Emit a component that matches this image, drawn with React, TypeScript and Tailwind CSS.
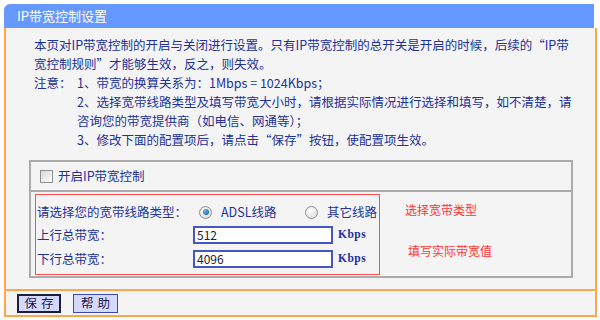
import React from 'react';

const ink = 'text-[#22329a]';

function Radio({ checked }: { checked?: boolean }) {
  return (
    <span className="w-[13px] h-[13px] rounded-full border border-[#8e9092] bg-[radial-gradient(circle_at_40%_35%,#ffffff,#d4d4d4)] flex items-center justify-center shrink-0">
      {checked && (
        <span className="w-[6px] h-[6px] rounded-full bg-[radial-gradient(circle_at_35%_35%,#5fb6e6,#145a8c)]" />
      )}
    </span>
  );
}

function Checkbox() {
  return (
    <span className="w-[13px] h-[13px] border border-[#8e9092] bg-linear-to-br from-[#d6d6d6] to-[#ffffff] shrink-0" />
  );
}

function BandRow({ label, value }: { label: string; value: string }) {
  return (
    <div className="h-[24px] flex items-center">
      <div className="w-[156px]">{label}</div>
      <div className="w-[140px] h-[18px] border-2 border-[#4657c4] bg-white text-[12px] leading-[14px] text-[#222] pl-[2px]">
        {value}
      </div>
      <span className="ml-[5px] font-['Liberation_Serif',serif] font-bold text-[11.5px] tracking-[0.5px]">Kbps</span>
    </div>
  );
}

export default function App() {
  return (
    <div className="w-[600px] h-[320px] bg-white pt-[4px] pl-[4px] font-['Noto_Sans_CJK_SC',sans-serif]">
      <div className="w-[593px]">
        <div className="w-[590px] h-[24px] bg-[#6699ff] rounded-tl-[6px] pl-[13px] text-[13px] leading-[24px] text-white">
          IP带宽控制设置
        </div>

        <div className="h-[261px] border-x-2 border-[#ffa64d] bg-[#f4f4f4] pt-[7px]">
          <div className={`pl-[28px] text-[12.5px] leading-[19px] whitespace-nowrap ${ink}`}>
            <div>本页对IP带宽控制的开启与关闭进行设置。只有IP带宽控制的总开关是开启的时候，后续的“IP带</div>
            <div>宽控制规则”才能够生效，反之，则失效。</div>
            <div className="flex">
              <span className="w-[43px]">注意：</span>
              <div>
                <div>1、带宽的换算关系为：1Mbps = 1024Kbps；</div>
                <div>2、选择宽带线路类型及填写带宽大小时，请根据实际情况进行选择和填写，如不清楚，请</div>
                <div>咨询您的带宽提供商（如电信、网通等）；</div>
                <div>3、修改下面的配置项后，请点击“保存”按钮，使配置项生效。</div>
              </div>
            </div>
          </div>

          <div className="ml-[23px] mt-[11px] w-[544px] h-[118px] border-2 border-[#ababab]">
            <div className="h-[30px] border-b-2 border-[#ababab] flex items-center pl-[9px] gap-[5px]">
              <Checkbox />
              <span className={`text-[12.5px] ${ink}`}>开启IP带宽控制</span>
            </div>

            <div className="flex pl-[4px] pt-[2px]">
              <div className={`w-[345px] h-[81px] border border-[#ff4d4d] pt-[6px] pl-[1px] text-[12.5px] ${ink}`}>
                <div className="h-[22px] flex items-center">
                  <div className="w-[162px]">请选择您的宽带线路类型：</div>
                  <div className="w-[106px] flex items-center gap-[9px]">
                    <Radio checked />
                    <span>ADSL线路</span>
                  </div>
                  <div className="flex items-center gap-[9px]">
                    <Radio />
                    <span>其它线路</span>
                  </div>
                </div>
                <BandRow label="上行总带宽：" value="512" />
                <BandRow label="下行总带宽：" value="4096" />
              </div>

              <div className="ml-[25px] flex flex-col text-[12px] leading-[18px] text-[#ff3333]">
                <span className="mt-[7px]">选择宽带类型</span>
                <span className="mt-[23px] ml-[3px]">填写实际带宽值</span>
              </div>
            </div>
          </div>
        </div>

        <div className="h-[28px] border-2 border-[#ffa64d] bg-[#f4f4f4] flex items-center pl-[11px] gap-[12px]">
          <button className="w-[44px] h-[19px] border-2 border-[#1a1f3d] bg-[#d6d9ff] text-[12.5px] leading-[14px] tracking-[4px] pl-[4px] text-[#1a1a4a]">
            保存
          </button>
          <button className="w-[45px] h-[19px] border border-[#3a4ab0] bg-[#d6d9ff] text-[12.5px] leading-[16px] tracking-[4px] pl-[4px] text-[#1a1a4a]">
            帮助
          </button>
        </div>
      </div>
    </div>
  );
}
